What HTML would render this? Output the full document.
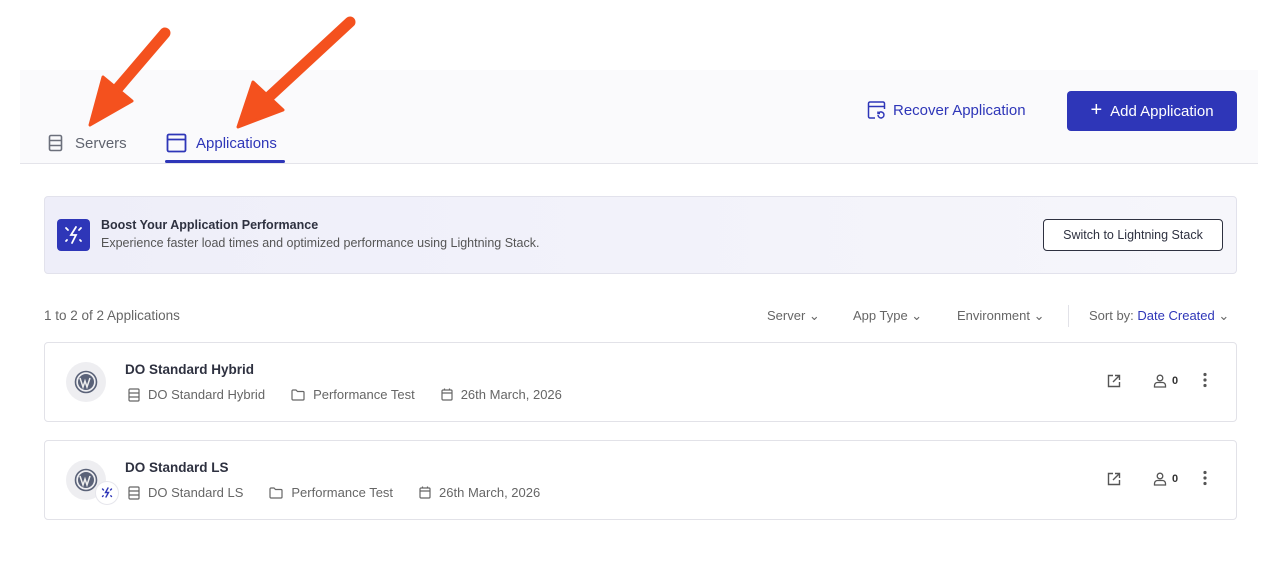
<!DOCTYPE html>
<html><head><meta charset="utf-8"><style>
*{box-sizing:border-box;margin:0;padding:0}
body{width:1278px;height:566px;background:#fff;font-family:"Liberation Sans",sans-serif;color:#333;position:relative;overflow:hidden}
.abs{position:absolute}
.hdr{left:20px;top:70px;width:1238px;height:94px;background:#fafafc;border-bottom:1px solid #e4e4ea}
.t{font-size:14px}
.card{left:44px;width:1193px;height:80px;border:1px solid #e2e2e8;border-radius:4px;background:#fff}
.wp{width:40px;height:40px;border-radius:50%;background:#eeeef1;display:flex;align-items:center;justify-content:center}
.meta{font-size:13px;color:#666;display:flex;align-items:center}
.meta svg{margin-right:8px}
</style></head><body>
<div class="abs hdr"></div>
<svg class="abs" style="left:47px;top:134px" width="18" height="18" viewBox="0 0 18 18" fill="none" stroke="#6b6f7b" stroke-width="1.6"><rect x="2.5" y="1.5" width="12" height="15" rx="1.5"/><path d="M2.5 6.5h12M2.5 11.5h12"/></svg>
<div class="abs t" style="left:75px;top:135px;font-size:15px;color:#60646f">Servers</div>
<svg class="abs" style="left:166px;top:133px" width="21" height="20" viewBox="0 0 21 20" fill="none" stroke="#2e36b8" stroke-width="1.8"><rect x="1.5" y="1.5" width="18" height="17" rx="1.5"/><path d="M1.5 6.5h18"/></svg>
<div class="abs" style="left:196px;top:135px;font-size:15px;color:#2e36b8">Applications</div>
<div class="abs" style="left:165px;top:160px;width:120px;height:3px;background:#2e36b8;border-radius:2px"></div>
<svg class="abs" style="left:0;top:0" width="400" height="140">
<g fill="#f4511e" stroke="#f4511e" stroke-linejoin="round" stroke-linecap="round">
<path d="M165 33 L118 88" stroke-width="11" fill="none"/>
<path d="M90 125 L103 77 L132 101 Z" stroke-width="3"/>
<path d="M350 22 L270 96" stroke-width="11" fill="none"/>
<path d="M238 127 L253 82 L283 110 Z" stroke-width="3"/>
</g></svg>
<svg class="abs" style="left:867px;top:101px" width="20" height="20" viewBox="0 0 20 20" fill="none" stroke="#2e36b8" stroke-width="1.5"><path d="M8 17H3a1.5 1.5 0 0 1-1.5-1.5v-13A1.5 1.5 0 0 1 3 1h13a1.5 1.5 0 0 1 1.5 1.5V8M1.5 5.5h16"/><path d="M11 14a3 3 0 1 0 1-2.3M11 10.5v2h2"/></svg>
<div class="abs" style="left:893px;top:102px;font-size:15px;color:#2e36b8">Recover Application</div>
<div class="abs" style="left:1067px;top:91px;width:170px;height:40px;background:#2e36b8;border-radius:4px;color:#fff;font-size:15px;display:flex;align-items:center;justify-content:center"><span style="font-size:20px;margin-right:8px;margin-top:-2px">+</span>Add Application</div>
<div class="abs" style="left:44px;top:196px;width:1193px;height:78px;background:linear-gradient(90deg,#eeeef9,#f6f6fb);border:1px solid #e2e2ec;border-radius:4px"></div>
<div class="abs" style="left:57px;top:219px;width:33px;height:32px;background:#2e36b8;border-radius:4px"></div>
<svg class="abs" style="left:57px;top:219px" width="33" height="32" viewBox="0 0 33 32" fill="none" stroke="#fff" stroke-width="1.8" stroke-linecap="round"><path d="M19 8l-5 8h5l-4 8"/><path d="M9 9l2 2M24 9l-2 2M9 22l1-1M24 22l-1-1"/></svg>
<div class="abs" style="left:101px;top:218px;font-size:12.5px;font-weight:bold;color:#2e3140">Boost Your Application Performance</div>
<div class="abs" style="left:101px;top:236px;font-size:12.5px;color:#555">Experience faster load times and optimized performance using Lightning Stack.</div>
<div class="abs" style="left:1043px;top:219px;width:180px;height:32px;border:1px solid #2e3140;border-radius:4px;background:#fff;font-size:12.5px;color:#2e3140;display:flex;align-items:center;justify-content:center">Switch to Lightning Stack</div>
<div class="abs" style="left:44px;top:308px;font-size:13.5px;color:#666">1 to 2 of 2 Applications</div>
<div class="abs" style="left:767px;top:308px;font-size:13px;color:#666">Server ⌄</div>
<div class="abs" style="left:853px;top:308px;font-size:13px;color:#666">App Type ⌄</div>
<div class="abs" style="left:957px;top:308px;font-size:13px;color:#666">Environment ⌄</div>
<div class="abs" style="left:1068px;top:305px;width:1px;height:22px;background:#e2e2e8"></div>
<div class="abs" style="left:1089px;top:308px;font-size:13px;color:#666">Sort by: <span style="color:#2e36b8">Date Created</span> ⌄</div>
<div class="abs card" style="top:342px"></div>
<div class="abs card" style="top:440px"></div>
<div class="abs wp" style="left:66px;top:362px"><svg width="24" height="24" viewBox="0 0 24 24"><circle cx="12" cy="12" r="10.5" fill="none" stroke="#5a6278" stroke-width="1.6"/><circle cx="12" cy="12" r="8" fill="#5a6278"/><path d="M6 8l3 9 2-6 2 6 3-9" stroke="#eee" stroke-width="1.5" fill="none"/></svg></div>
<div class="abs wp" style="left:66px;top:460px"><svg width="24" height="24" viewBox="0 0 24 24"><circle cx="12" cy="12" r="10.5" fill="none" stroke="#5a6278" stroke-width="1.6"/><circle cx="12" cy="12" r="8" fill="#5a6278"/><path d="M6 8l3 9 2-6 2 6 3-9" stroke="#eee" stroke-width="1.5" fill="none"/></svg></div>
<div class="abs" style="left:95px;top:481px;width:24px;height:24px;border-radius:50%;background:#fff;border:1px solid #e6e6ec"></div>
<svg class="abs" style="left:99px;top:485px" width="16" height="16" viewBox="0 0 16 16" fill="none" stroke="#2e36b8" stroke-width="1.4" stroke-linecap="round"><path d="M9 3l-2.5 4.5h3L7 12"/><path d="M3.5 4l1 1M12.5 4l-1 1M3.5 11.5l.7-.7M12.5 11.5l-.7-.7"/></svg>
<div class="abs" style="left:125px;top:362px;font-size:13.5px;font-weight:bold;color:#2e3140">DO Standard Hybrid</div>
<div class="abs" style="left:125px;top:460px;font-size:13.5px;font-weight:bold;color:#2e3140">DO Standard LS</div>
<div class="abs meta" style="left:128px;top:387px">
<svg width="12" height="14" viewBox="0 0 12 14" fill="none" stroke="#666" stroke-width="1.2"><rect x="1" y="1" width="10" height="12" rx="1"/><path d="M1 5h10M1 9h10"/></svg>DO Standard Hybrid
<svg style="margin-left:26px" width="14" height="12" viewBox="0 0 14 12" fill="none" stroke="#666" stroke-width="1.2"><path d="M1 2a1 1 0 0 1 1-1h3l1.5 1.5H12a1 1 0 0 1 1 1V10a1 1 0 0 1-1 1H2a1 1 0 0 1-1-1z"/></svg>Performance Test
<svg style="margin-left:26px" width="12" height="13" viewBox="0 0 12 13" fill="none" stroke="#666" stroke-width="1.2"><rect x="1" y="2" width="10" height="10" rx="1"/><path d="M1 5h10M3.5 0.5v2M8.5 0.5v2"/></svg>26th March, 2026</div>
<div class="abs meta" style="left:128px;top:485px">
<svg width="12" height="14" viewBox="0 0 12 14" fill="none" stroke="#666" stroke-width="1.2"><rect x="1" y="1" width="10" height="12" rx="1"/><path d="M1 5h10M1 9h10"/></svg>DO Standard LS
<svg style="margin-left:26px" width="14" height="12" viewBox="0 0 14 12" fill="none" stroke="#666" stroke-width="1.2"><path d="M1 2a1 1 0 0 1 1-1h3l1.5 1.5H12a1 1 0 0 1 1 1V10a1 1 0 0 1-1 1H2a1 1 0 0 1-1-1z"/></svg>Performance Test
<svg style="margin-left:26px" width="12" height="13" viewBox="0 0 12 13" fill="none" stroke="#666" stroke-width="1.2"><rect x="1" y="2" width="10" height="10" rx="1"/><path d="M1 5h10M3.5 0.5v2M8.5 0.5v2"/></svg>26th March, 2026</div>
<svg class="abs" style="left:1107px;top:374px" width="14" height="14" viewBox="0 0 14 14" fill="none" stroke="#555" stroke-width="1.4"><path d="M6 1.5H1.5v11h11V8M8 1.5h4.5V6M12.5 1.5L6 8"/></svg>
<svg class="abs" style="left:1153px;top:374px" width="14" height="14" viewBox="0 0 14 14" fill="none" stroke="#555" stroke-width="1.3"><circle cx="7" cy="4" r="2.8"/><path d="M1.5 13v-1.5a3 3 0 0 1 3-3h5a3 3 0 0 1 3 3V13z"/></svg>
<div class="abs" style="left:1172px;top:375px;font-size:11px;font-weight:bold">0</div>
<svg class="abs" style="left:1202px;top:372px" width="6" height="16"><circle cx="3" cy="2.5" r="1.6" fill="#555"/><circle cx="3" cy="8" r="1.6" fill="#555"/><circle cx="3" cy="13.5" r="1.6" fill="#555"/></svg>
<svg class="abs" style="left:1107px;top:472px" width="14" height="14" viewBox="0 0 14 14" fill="none" stroke="#555" stroke-width="1.4"><path d="M6 1.5H1.5v11h11V8M8 1.5h4.5V6M12.5 1.5L6 8"/></svg>
<svg class="abs" style="left:1153px;top:472px" width="14" height="14" viewBox="0 0 14 14" fill="none" stroke="#555" stroke-width="1.3"><circle cx="7" cy="4" r="2.8"/><path d="M1.5 13v-1.5a3 3 0 0 1 3-3h5a3 3 0 0 1 3 3V13z"/></svg>
<div class="abs" style="left:1172px;top:473px;font-size:11px;font-weight:bold">0</div>
<svg class="abs" style="left:1202px;top:470px" width="6" height="16"><circle cx="3" cy="2.5" r="1.6" fill="#555"/><circle cx="3" cy="8" r="1.6" fill="#555"/><circle cx="3" cy="13.5" r="1.6" fill="#555"/></svg>
</body></html>
